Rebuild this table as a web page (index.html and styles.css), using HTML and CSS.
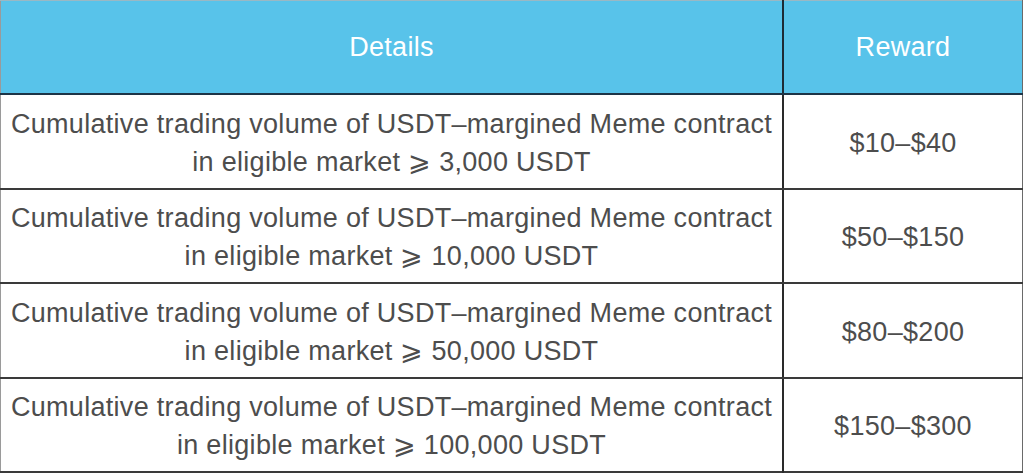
FILE: index.html
```html
<!DOCTYPE html>
<html>
<head>
<meta charset="utf-8">
<link rel="stylesheet" href="styles.css">
</head>
<body>
<table class="rewards">
  <thead>
    <tr><th class="col-details">Details</th><th class="col-reward">Reward</th></tr>
  </thead>
  <tbody>
    <tr><td class="details">Cumulative trading volume of USDT–margined Meme contract<br>in eligible market ⩾ 3,000 USDT</td><td class="reward">$10–$40</td></tr>
    <tr><td class="details">Cumulative trading volume of USDT–margined Meme contract<br>in eligible market ⩾ 10,000 USDT</td><td class="reward">$50–$150</td></tr>
    <tr><td class="details">Cumulative trading volume of USDT–margined Meme contract<br>in eligible market ⩾ 50,000 USDT</td><td class="reward">$80–$200</td></tr>
    <tr><td class="details">Cumulative trading volume of USDT–margined Meme contract<br>in eligible market ⩾ 100,000 USDT</td><td class="reward">$150–$300</td></tr>
  </tbody>
</table>
</body>
</html>
```
FILE: styles.css
```css
html, body {
  margin: 0;
  padding: 0;
  background: #ffffff;
}
.rewards {
  width: 1023px;
  border-collapse: collapse;
  font-family: "Liberation Sans", Arial, sans-serif;
  letter-spacing: 0.3px;
  border-left: 1px solid #9a9a9a;
  border-right: 1px solid #6a6a6a;
  border-top: 1px solid #9ab8c4;
  border-bottom: 2px solid #3a3a3a;
}
.rewards th {
  background: #58c3ea;
  color: #ffffff;
  font-weight: 400;
  font-size: 27px;
  height: 92px;
  padding: 0;
  border-bottom: 2px solid #1d3446;
}
.col-details {
  width: 781px;
  border-right: 2px solid #1d2b36;
}
.rewards td {
  height: 94.5px;
  padding: 3px 0 0;
  box-sizing: border-box;
  text-align: center;
  color: #4d4d4d;
  font-size: 27px;
  line-height: 38px;
  border-bottom: 2px solid #3a3a3a;
}
.rewards td.details {
  border-right: 2px solid #2a2a2a;
}
.rewards tr:last-child td {
  border-bottom: none;
}
```
